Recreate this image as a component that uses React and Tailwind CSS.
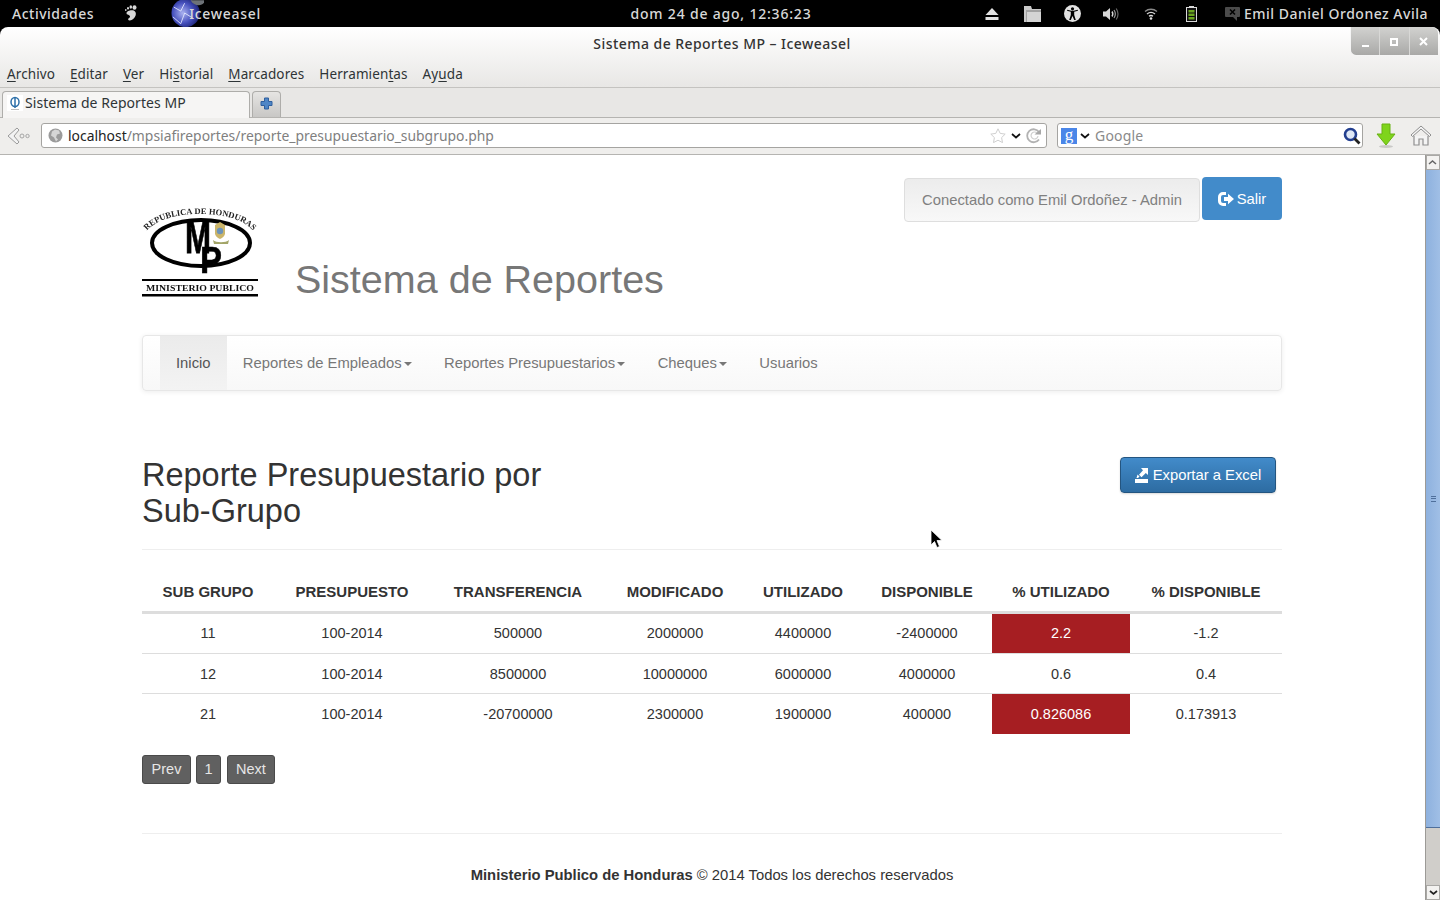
import React from 'react';

// --- Table data ---
const columns = [
    { label: 'SUB GRUPO', width: 'w-[132px]' },
    { label: 'PRESUPUESTO', width: 'w-[156px]' },
    { label: 'TRANSFERENCIA', width: 'w-[176px]' },
    { label: 'MODIFICADO', width: 'w-[138px]' },
    { label: 'UTILIZADO', width: 'w-[118px]' },
    { label: 'DISPONIBLE', width: 'w-[130px]' },
    { label: '% UTILIZADO', width: 'w-[138px]' },
    { label: '% DISPONIBLE', width: 'w-[152px]' },
];

const rows = [
    { cells: ['11', '100-2014', '500000', '2000000', '4400000', '-2400000', '2.2', '-1.2'], over: true, height: 'h-[41px]', pad: 'pt-[2px]' },
    { cells: ['12', '100-2014', '8500000', '10000000', '6000000', '4000000', '0.6', '0.4'], over: false, height: 'h-[40px]', pad: 'pt-[4px]' },
    { cells: ['21', '100-2014', '-20700000', '2300000', '1900000', '400000', '0.826086', '0.173913'], over: true, height: 'h-[41px]', pad: 'pt-[3px]' },
];

const menus = [
    { label: 'Archivo', u: 0 },
    { label: 'Editar', u: 0 },
    { label: 'Ver', u: 0 },
    { label: 'Historial', u: 2 },
    { label: 'Marcadores', u: 0 },
    { label: 'Herramientas', u: 9 },
    { label: 'Ayuda', u: 2 },
];

const navItems = [
    { label: 'Reportes de Empleados', caret: true },
    { label: 'Reportes Presupuestarios', caret: true },
    { label: 'Cheques', caret: true },
    { label: 'Usuarios', caret: false },
];

// --- Desktop icons ---
const GnomeFoot = () => (
    <svg width="16" height="17" viewBox="0 0 16 17" fill="#d8d8d8">
        <ellipse cx="12.5" cy="2.5" rx="2" ry="2.2" />
        <ellipse cx="8.8" cy="2" rx="1.3" ry="1.7" />
        <ellipse cx="6" cy="3.2" rx="1" ry="1.3" />
        <ellipse cx="3.8" cy="5" rx=".8" ry="1" />
        <path d="M9.5 5.2c3.5-.3 5.2 2.5 4 5.6-1 2.6-3.3 4.8-5.8 4.7-1.6-.1-2.2-1.4-1-2.2 1-.7 1.8-1.4 1-2.6-1-1.3-3.2-.9-3.2-2.5 0-2 3-2.9 5-3z" />
    </svg>
);

const Globe = () => (
    <svg width="34" height="27" viewBox="0 0 34 27">
        <defs>
            <radialGradient id="globe" cx="0.4" cy="0.5" r="0.6">
                <stop offset="0" stopColor="#aab2f0" />
                <stop offset="0.6" stopColor="#4650bd" />
                <stop offset="1" stopColor="#1d2475" />
            </radialGradient>
        </defs>
        <circle cx="15" cy="13" r="14.500" fill="url(#globe)" />
        <path d="M3 7l7 4 4-8M2 17l8 7 4-11 8 5" stroke="#e6eaff" strokeWidth="0.9" fill="none" />
        <path d="M20 0h14v2c-2 4-10 5-14-2z" fill="#6d7277" />
    </svg>
);

const Eject = () => (
    <svg width="14" height="12" viewBox="0 0 14 12" fill="#e2e2e2">
        <path d="M7 0l6.5 7H.5z" />
        <rect x=".5" y="9" width="13" height="3" />
    </svg>
);

const FolderIcon = () => (
    <svg width="17" height="16" viewBox="0 0 17 16">
        <path d="M0 0h7l1 3h9v13H0z" fill="#c9c9c9" />
        <path d="M2 4h15v12H2z" fill="#a2a2a2" />
        <path d="M3 6h14v10H3z" fill="#d4d4d4" />
    </svg>
);

const Accessibility = () => (
    <svg width="17" height="17" viewBox="0 0 17 17">
        <circle cx="8.5" cy="8.5" r="8.5" fill="#e2e2e2" />
        <circle cx="8.5" cy="3.8" r="1.6" fill="#000" />
        <path d="M3 5.8l3.8 1v3.2l-1.6 5h1.6l1.7-4 1.7 4h1.6l-1.6-5V6.8l3.8-1-.3-1-4 1H7.3l-4-1z" fill="#000" />
    </svg>
);

const Volume = () => (
    <svg width="16" height="14" viewBox="0 0 16 14" fill="none">
        <path d="M0 4.500h3L7 1v12L3 9.500H0z" fill="#d8d8d8" />
        <path d="M9 4.500c1 1.500 1 3.500 0 5" stroke="#d8d8d8" strokeWidth="1.400" />
        <path d="M11 3c1.700 2.500 1.700 5.500 0 8" stroke="#9a9a9a" strokeWidth="1.200" />
        <path d="M13.200 1.500c2.300 3.500 2.300 7.500 0 11" stroke="#666" strokeWidth="1.200" />
    </svg>
);

const Wifi = () => (
    <svg width="14" height="12" viewBox="0 0 14 12" fill="none">
        <path d="M1 3.500c3.500-3 8.500-3 12 0" stroke="#8a8a8a" strokeWidth="1.300" />
        <path d="M3 6c2.400-2 5.600-2 8 0" stroke="#d8d8d8" strokeWidth="1.300" />
        <path d="M5 8.300c1.200-1 2.800-1 4 0" stroke="#e2e2e2" strokeWidth="1.300" />
        <circle cx="7" cy="10.500" r="1.300" fill="#e2e2e2" />
    </svg>
);

const Battery = () => (
    <svg width="11" height="16" viewBox="0 0 11 16">
        <rect x="3" y="0" width="5" height="2" fill="#d8d8d8" />
        <rect x=".5" y="1.500" width="10" height="14" fill="#111" stroke="#d8d8d8" />
        <rect x="2.500" y="4" width="6" height="2.500" fill="#6aa51e" />
        <rect x="2.500" y="7.500" width="6" height="2.500" fill="#6aa51e" />
        <rect x="2.500" y="11" width="6" height="2.500" fill="#6aa51e" />
    </svg>
);

const ChatBubble = () => (
    <svg width="15" height="14" viewBox="0 0 15 14">
        <path d="M1 0h13a1 1 0 011 1v8a1 1 0 01-1 1h-2v4l-4-4H1a1 1 0 01-1-1V1a1 1 0 011-1z" fill="#4b4b4b" />
        <path d="M5 2.500l5 5M10 2.500l-5 5" stroke="#000" strokeWidth="1.600" />
    </svg>
);

// --- Browser toolbar icons ---
const BackArrow = () => (
    <svg width="24" height="20" viewBox="0 0 24 20" fill="none">
        <path d="M11 2L2 10l9 8 2-2-5-6 5-6z" fill="#f3f3f3" stroke="#9a9a9a" />
        <circle cx="16" cy="10" r="2" stroke="#a5a5a5" />
        <circle cx="21.500" cy="10" r="1.700" stroke="#a5a5a5" />
    </svg>
);

const SmallGlobe = () => (
    <svg width="15" height="15" viewBox="0 0 15 15">
        <circle cx="7.500" cy="7.500" r="7" fill="#9b9b9b" />
        <path d="M7 1.500l4 1 1 3-3 1-1 3 2 2-2 2-2-4-3-2 1-4z" fill="#d6d6d6" />
    </svg>
);

const Star = () => (
    <svg width="16" height="15" viewBox="0 0 16 15">
        <path d="M8 .8l2.200 4.600 5 .7-3.600 3.500.9 5L8 12.200 3.500 14.600l.9-5L.8 6.100l5-.7z" fill="#fff" stroke="#cfcfcf" />
    </svg>
);

const Chevron = () => (
    <svg width="10" height="6" viewBox="0 0 10 6" fill="none">
        <path d="M1 1l4 3.500L9 1" stroke="#111" strokeWidth="1.700" />
    </svg>
);

const Reload = () => (
    <svg width="17" height="16" viewBox="0 0 17 16" fill="none">
        <path d="M13 11.500A6.500 6.500 0 1113 4" stroke="#b2b2b2" strokeWidth="1.800" />
        <path d="M12 8a3.500 3.500 0 11-1-3" stroke="#d0d0d0" strokeWidth="1.200" />
        <path d="M8.500 6.500H15V1z" fill="#a8a8a8" />
    </svg>
);

const Magnifier = () => (
    <svg width="18" height="18" viewBox="0 0 18 18" fill="none">
        <circle cx="7.500" cy="7.500" r="5.500" fill="#dfe8f6" stroke="#233f8f" strokeWidth="2.600" />
        <path d="M11.500 11.500l5 5" stroke="#222" strokeWidth="2.800" />
    </svg>
);

const DownloadArrow = () => (
    <svg width="20" height="26" viewBox="0 0 20 26">
        <ellipse cx="10" cy="23.500" rx="7" ry="1.500" fill="#c9c9c7" />
        <path d="M6 1h8v10h5l-9 11L1 11h5z" fill="#7fd41c" stroke="#69b113" />
    </svg>
);

const HomeIcon = () => (
    <svg width="22" height="21" viewBox="0 0 22 21" fill="none">
        <path d="M1 10L11 1l10 9-1.500 1.500L11 4l-8.500 7.500z" fill="#f4f4f4" stroke="#8f8f8f" />
        <path d="M4 11v9h5v-6h4v6h5v-9" fill="#f4f4f4" stroke="#8f8f8f" strokeWidth="1.200" />
    </svg>
);

const PlusIcon = () => (
    <svg width="13" height="13" viewBox="0 0 13 13">
        <path d="M4.500 1h4v3.500H12v4H8.500V12h-4V8.500H1v-4h3.500z" fill="#4f86c6" stroke="#2f5f9e" />
    </svg>
);

const TabFavicon = () => (
    <svg width="16" height="16" viewBox="0 0 16 16">
        <rect width="16" height="16" fill="#fff" />
        <ellipse cx="8" cy="7" rx="4" ry="4.500" fill="none" stroke="#2d6fa8" strokeWidth="1.500" />
        <path d="M8 2v11" stroke="#2d6fa8" strokeWidth="1.500" />
        <path d="M4 14.500h8" stroke="#bbb" />
    </svg>
);

// --- Page icons ---
const LogOutIcon = () => (
    <svg width="16" height="14" viewBox="0 0 16 14">
        <path d="M6.500 0H5a5 5 0 00-5 5v4a5 5 0 005 5h3v-3H5a2 2 0 01-2-2V5a2 2 0 012-2h3V0z" fill="#fff" />
        <path d="M6 5h4V1.800L16 7l-6 5.200V9H6z" fill="#fff" />
    </svg>
);

const ExportIcon = () => (
    <svg width="13" height="15" viewBox="0 0 13 15" fill="#fff">
        <path d="M6 0h7v7l-2.200-2L6.500 9.300 4 6.800 8 2.200z" />
        <path d="M2.500 6.500L4.500 8.500 3 10H1.500z" />
        <rect x="0" y="11" width="13" height="4" />
    </svg>
);

const Logo = () => (
    <svg className="blur-[0.4px]" width="116" height="93" viewBox="0 0 116 93">
        <defs>
            <path id="logo-arc" d="M1 31C10 15 33 9 58 9s48 6 57 22" />
        </defs>
        <text fontFamily="'Liberation Serif', serif" fontWeight="700" fontSize="8.500" fill="#222">
            <textPath href="#logo-arc" startOffset="50%" textAnchor="middle">REPUBLICA DE HONDURAS</textPath>
        </text>
        <ellipse cx="59" cy="38" rx="49" ry="23" fill="#fff" stroke="#000" strokeWidth="4" />
        <text x="43" y="48" fill="#000" stroke="#000" strokeWidth="0.800" fontFamily="'Liberation Sans', sans-serif" fontWeight="700" fontSize="47" textLength="26" lengthAdjust="spacingAndGlyphs">M</text>
        <text x="58" y="68" fill="#000" stroke="#000" strokeWidth="0.500" fontFamily="'Liberation Sans', sans-serif" fontWeight="700" fontSize="36" textLength="22" lengthAdjust="spacingAndGlyphs">P</text>
        <path d="M73 20l5-3 5 3v9c-1 3-3 4-5 5-2-1-4-2-5-5z" fill="#cbb56a" />
        <circle cx="78" cy="26" r="3.200" fill="#6d93b8" />
        <path d="M71 35c3 3 13 3 16 0l-1 4H72z" fill="#a3a568" />
        <rect x="0" y="74" width="116" height="2" fill="#000" />
        <text x="58" y="86" textAnchor="middle" fontFamily="'Liberation Serif', serif" fontWeight="700" fontSize="9" fill="#111" textLength="108" lengthAdjust="spacingAndGlyphs">MINISTERIO  PUBLICO</text>
        <rect x="0" y="89" width="116" height="2.500" fill="#000" />
    </svg>
);

const Caret = () => (
    <span className="ml-[2px] inline-block w-0 h-0 border-x-[4px] border-x-transparent border-t-[4px] border-t-[#777] align-middle" />
);

const Mnemonic = ({ label, u }) => (
    <span>
        {label.slice(0, u)}
        <span className="underline underline-offset-2">{label[u]}</span>
        {label.slice(u + 1)}
    </span>
);

// --- Window chrome ---
const TopBar = () => (
    <div className="h-[27px] shrink-0 bg-black text-[#d8d8d8] flex items-center font-['Noto_Sans',sans-serif] text-[14px] font-medium tracking-[0.5px] overflow-hidden whitespace-nowrap">
        <span className="ml-[12px] w-[110px]">Actividades</span>
        <span className="w-[49px] flex justify-start"><GnomeFoot /></span>
        <span className="relative flex items-center h-full w-[90px]">
            <Globe />
            <span className="ml-[-15px] tracking-[0.7px]">Iceweasel</span>
        </span>
        <span className="ml-[365px] w-[190px] text-center tracking-[0.8px]">dom 24 de ago, 12:36:23</span>
        <div className="ml-auto flex items-center">
            <span className="w-[40px] flex justify-center"><Eject /></span>
            <span className="w-[40px] flex justify-center"><FolderIcon /></span>
            <span className="w-[40px] flex justify-center"><Accessibility /></span>
            <span className="w-[38px] flex justify-center"><Volume /></span>
            <span className="w-[42px] flex justify-center"><Wifi /></span>
            <span className="w-[38px] flex justify-center"><Battery /></span>
            <span className="ml-[15px] mr-[4px]"><ChatBubble /></span>
            <span className="mr-[12px]">Emil Daniel Ordonez Avila</span>
        </div>
    </div>
);

const WindowControls = () => (
    <div className="absolute right-[2px] top-0 h-[29px] w-[88px] flex rounded-bl-[6px] rounded-tr-[6px] border-b border-l border-[#f5f5f5] bg-gradient-to-b from-[#d2d2d0] to-[#a9a9a7]">
        <span className="flex-1 flex items-center justify-center border-r border-[#d8d8d6]">
            <span className="mt-[9px] w-[7px] h-[2px] bg-white" />
        </span>
        <span className="flex-1 flex items-center justify-center border-r border-[#d8d8d6]">
            <span className="mt-[1px] w-[8px] h-[8px] border-2 border-white" />
        </span>
        <span className="flex-1 flex items-center justify-center">
            <svg width="9" height="9" viewBox="0 0 9 9"><path d="M1 1l7 7M8 1L1 8" stroke="#fff" strokeWidth="2" /></svg>
        </span>
    </div>
);

const Browser = () => (
    <div className="shrink-0 font-['Noto_Sans',sans-serif] text-[#2e3436] text-[14px]">
        <div className="relative h-[61px] rounded-t-[8px] bg-gradient-to-b from-white to-[#e8e7e5] border-b border-[#c4c3c0] flex flex-col">
            <div className="h-[33px] pl-[4px] flex items-center justify-center font-medium tracking-[0.45px] text-[#333]">
                Sistema de Reportes MP – Iceweasel
            </div>
            <div className="h-[27px] pt-px flex items-center pl-[7px] gap-[15px] text-[13.500px] tracking-[0.1px]">
                {menus.map(m => <Mnemonic key={m.label} label={m.label} u={m.u} />)}
            </div>
            <WindowControls />
        </div>
        <div className="h-[30px] bg-[#e8e7e5] flex items-end pl-[2px] gap-[2px] border-b border-[#b5b4b1]">
            <div className="h-[27px] w-[248px] -mb-px pb-[5px] bg-[#f6f5f4] rounded-t-[4px] border border-b-0 border-[#aeadaa] flex items-center pl-[4px] gap-[2px] tracking-[0.05px]">
                <TabFavicon />
                <span>Sistema de Reportes MP</span>
            </div>
            <div className="h-[26px] w-[29px] pb-[2px] bg-gradient-to-b from-[#e6e5e3] to-[#c8c7c5] rounded-t-[4px] border border-b-0 border-[#aeadaa] flex items-center justify-center">
                <PlusIcon />
            </div>
        </div>
        <div className="h-[37px] pb-px bg-[#efeeec] border-b border-[#b5b4b1] flex items-center pl-[6px]">
            <span className="w-[35px]"><BackArrow /></span>
            <div className="h-[25px] w-[1006px] bg-white border border-[#a5a4a1] rounded-[3px] flex items-center pl-[6px] pr-[3px]">
                <SmallGlobe />
                <span className="ml-[5px] pt-px text-[13.900px] text-[#222]">localhost<span className="text-[#808080]">/mpsiafireportes/reporte_presupuestario_subgrupo.php</span></span>
                <div className="ml-auto flex items-center gap-[5px]">
                    <Star />
                    <Chevron />
                    <Reload />
                </div>
            </div>
            <div className="ml-[10px] h-[25px] w-[306px] bg-white border border-[#a5a4a1] rounded-[3px] flex items-center pl-[3px] pr-[1px]">
                <span className="w-[16px] h-[16px] bg-[#4a86e8] text-white text-[17px] leading-[14px] text-center font-['Liberation_Serif',serif]">g</span>
                <span className="ml-[3px]"><Chevron /></span>
                <span className="ml-[5px] text-[#8a8a8a] tracking-[0.2px]">Google</span>
                <span className="ml-auto"><Magnifier /></span>
            </div>
            <span className="ml-[13px] w-[34px]"><DownloadArrow /></span>
            <HomeIcon />
        </div>
    </div>
);

const Scrollbar = () => (
    <div className="w-[15px] shrink-0 flex flex-col bg-[#d0ceca] border-l border-[#9c9a96]">
        <div className="h-[15px] bg-[#f3f2f0] border border-[#a9a8a5] flex items-center justify-center rotate-180">
            <svg width="9" height="6" viewBox="0 0 9 6" fill="none"><path d="M1 1l3.500 3L8 1" stroke="#666" strokeWidth="1.500" /></svg>
        </div>
        <div className="h-[658px] bg-gradient-to-r from-[#8eb1de] to-[#a0bfe6] border-b border-[#4f6f9b] flex items-center justify-center">
            <div className="w-[5px] h-[6px] border-y border-[#4f6f9b] flex items-center"><div className="w-full h-px bg-[#4f6f9b]" /></div>
        </div>
        <div className="flex-1" />
        <div className="h-[15px] bg-[#f3f2f0] border border-[#a9a8a5] flex items-center justify-center">
            <svg width="9" height="6" viewBox="0 0 9 6" fill="none"><path d="M1 1l3.500 3L8 1" stroke="#222" strokeWidth="1.700" /></svg>
        </div>
    </div>
);

// --- Page content ---
const Header = () => (
    <div className="relative h-[180px] pt-[50px]">
        <div className="flex items-end">
            <Logo />
            <h1 className="ml-[37px] mb-[-3px] text-[39.500px] leading-[43px] text-[#777]">Sistema de Reportes</h1>
        </div>
        <div className="absolute right-0 top-[22px] flex gap-[2px] items-start">
            <div className="mt-px h-[44px] w-[296px] flex items-center justify-center rounded-[4px] border border-[#dedede] bg-gradient-to-b from-[#ececec] to-[#f8f8f8] text-[#808080] text-[14.800px]">
                Conectado como Emil Ordoñez - Admin
            </div>
            <div className="h-[43px] pt-px w-[80px] flex items-center justify-center gap-[3px] rounded-[4px] bg-[#428bca] text-white text-[14.800px]">
                <LogOutIcon />
                Salir
            </div>
        </div>
    </div>
);

const Navbar = () => (
    <div className="h-[56px] flex pl-[17px] rounded-[4px] border border-[#e7e7e7] bg-gradient-to-b from-white to-[#f8f8f8] shadow-[0_1px_5px_rgba(0,0,0,0.075)] text-[14.800px] text-[#777]">
        <div className="h-full pt-px px-[16px] flex items-center bg-gradient-to-b from-[#ebebeb] to-[#f3f3f3] text-[#555]">Inicio</div>
        {navItems.map(item => (
            <div key={item.label} className="h-full pt-px px-[16.250px] flex items-center">
                {item.label}
                {item.caret && <Caret />}
            </div>
        ))}
    </div>
);

const ReportTitle = () => (
    <div className="mt-[66px] h-[93px] flex justify-between border-b border-[#eeeeee]">
        <h2 className="w-[440px] text-[32.500px] leading-[36px] text-[#333]">Reporte Presupuestario por Sub-Grupo</h2>
        <div className="mr-[6px] pt-px h-[36px] w-[156px] flex items-center justify-center gap-[5px] rounded-[4px] border border-[#245580] bg-gradient-to-b from-[#428bca] to-[#2d6ca2] text-white text-[14.800px] shadow-[0_1px_2px_rgba(0,0,0,0.15)]">
            <ExportIcon />
            Exportar a Excel
        </div>
    </div>
);

const ReportTable = () => (
    <table className="mt-[20px] w-full table-fixed border-collapse text-center text-[14.500px] text-[#333]">
        <colgroup>
            {columns.map(c => <col key={c.label} className={c.width} />)}
        </colgroup>
        <thead>
            <tr className="h-[42px] border-b-[3px] border-[#dddddd]">
                {columns.map(c => <th key={c.label} className="font-bold pt-[3px] text-[15px]">{c.label}</th>)}
            </tr>
        </thead>
        <tbody>
            {rows.map((row, i) => (
                <tr key={row.cells[0]} className={`${row.height} ${i < rows.length - 1 ? 'border-b border-[#dddddd]' : ''}`}>
                    {row.cells.map((cell, j) => (
                        <td key={j} className={`${row.pad} ${j === 6 && row.over ? 'bg-[#a61e22] text-white' : ''}`}>{cell}</td>
                    ))}
                </tr>
            ))}
        </tbody>
    </table>
);

const PageButton = ({ children, width }) => (
    <span className={`${width} h-[29px] flex items-center justify-center rounded-[3px] border border-[#4a4a4a] bg-[#606060] text-[#e6e6e6] text-[14.500px]`}>{children}</span>
);

const Pagination = () => (
    <div className="mt-[21px] flex gap-[5px]">
        <PageButton width="w-[49px]">Prev</PageButton>
        <PageButton width="w-[25px]">1</PageButton>
        <PageButton width="w-[48px] ml-px">Next</PageButton>
    </div>
);

const Footer = () => (
    <div className="mt-[49px] border-t border-[#eeeeee] pt-[31px] text-center text-[14.800px] leading-[20px] text-[#333]">
        <b>Ministerio Publico de Honduras</b> © 2014 Todos los derechos reservados
    </div>
);

const Cursor = () => (
    <svg className="absolute left-[930px] top-[529px]" width="14" height="20" viewBox="0 0 14 20">
        <path d="M1 1v15l3.500-3.500 2.500 6 2.500-1-2.500-6H12z" fill="#000" stroke="#fff" strokeWidth="0.800" />
    </svg>
);

const App = () => (
    <div className="relative w-[1440px] h-[900px] overflow-hidden flex flex-col bg-black font-['Liberation_Sans',sans-serif]">
        <TopBar />
        <Browser />
        <div className="flex-1 min-h-0 flex bg-white">
            <div className="flex-1 min-w-0 pl-[142px]">
                <div className="w-[1140px]">
                    <Header />
                    <Navbar />
                    <ReportTitle />
                    <ReportTable />
                    <Pagination />
                    <Footer />
                </div>
            </div>
            <Scrollbar />
        </div>
        <Cursor />
    </div>
);

export default App;
